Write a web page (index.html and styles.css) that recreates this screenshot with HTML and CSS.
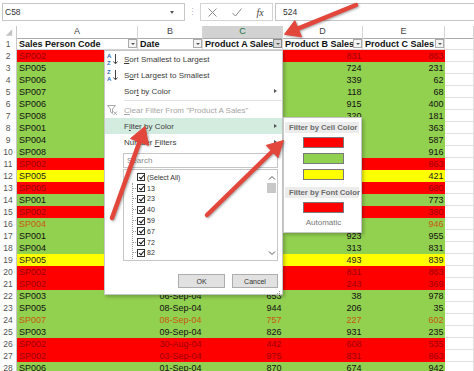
FILE: index.html
```html
<!DOCTYPE html>
<html>
<head>
<meta charset="utf-8">
<link rel="stylesheet" href="styles.css">
</head>
<body>
<div class="fbar">
  <div class="namebox"><span>C58</span><span class="nb-arrow"></span></div>
  <div class="fdots">⋮</div>
  <div class="fxbox">
    <div class="slot"><svg width="9" height="9" viewBox="0 0 9 9"><path d="M0.5 0.5L8.5 8.5M8.5 0.5L0.5 8.5" stroke="#8c8c8c" stroke-width="1" fill="none"/></svg></div>
    <div class="slot"><svg width="10" height="9" viewBox="0 0 10 9"><path d="M0.5 5L3.5 8L9.5 0.5" stroke="#8c8c8c" stroke-width="1" fill="none"/></svg></div>
    <div class="slot"><span class="fx">fx</span></div>
  </div>
  <div class="finput">524</div>
</div>

<div class="sheet">
  <div class="row colhead">
    <div class="corner"><svg width="17" height="12" viewBox="0 0 17 12"><polygon points="13,3 13,10 6,10" fill="#c4c4c4"/></svg></div>
    <div class="ch">A</div><div class="ch">B</div><div class="ch sel">C</div><div class="ch">D</div><div class="ch">E</div><div class="ch"></div>
  </div>
  <div class="row hdr">
    <div class="rn">1</div>
    <div class="hc"><span class="ht">Sales Person Code</span><span class="fb"></span></div>
    <div class="hc"><span class="ht">Date</span><span class="fb"></span></div>
    <div class="hc"><span class="ht">Product A Sales</span><span class="fb on"></span></div>
    <div class="hc"><span class="ht">Product B Sales</span><span class="fb"></span></div>
    <div class="hc"><span class="ht">Product C Sales</span><span class="fb"></span></div>
    <div class="c x"></div>
  </div>
  <div class="row r"><div class="rn">2</div><div class="c">SP002</div><div class="c n">02-Sep-04</div><div class="c n">524</div><div class="c n">831</div><div class="c n">863</div><div class="c x"></div></div>
  <div class="row g"><div class="rn">3</div><div class="c">SP005</div><div class="c n">01-Sep-04</div><div class="c n">412</div><div class="c n">724</div><div class="c n">231</div><div class="c x"></div></div>
  <div class="row g"><div class="rn">4</div><div class="c">SP006</div><div class="c n">05-Sep-04</div><div class="c n">145</div><div class="c n">339</div><div class="c n">62</div><div class="c x"></div></div>
  <div class="row g"><div class="rn">5</div><div class="c">SP007</div><div class="c n">31-Aug-04</div><div class="c n">882</div><div class="c n">118</div><div class="c n">68</div><div class="c x"></div></div>
  <div class="row g"><div class="rn">6</div><div class="c">SP006</div><div class="c n">04-Sep-04</div><div class="c n">301</div><div class="c n">915</div><div class="c n">400</div><div class="c x"></div></div>
  <div class="row g"><div class="rn">7</div><div class="c">SP008</div><div class="c n">07-Sep-04</div><div class="c n">677</div><div class="c n">320</div><div class="c n">181</div><div class="c x"></div></div>
  <div class="row g"><div class="rn">8</div><div class="c">SP001</div><div class="c n">02-Sep-04</div><div class="c n">259</div><div class="c n">563</div><div class="c n">363</div><div class="c x"></div></div>
  <div class="row g"><div class="rn">9</div><div class="c">SP004</div><div class="c n">06-Sep-04</div><div class="c n">713</div><div class="c n">402</div><div class="c n">587</div><div class="c x"></div></div>
  <div class="row g"><div class="rn">10</div><div class="c">SP008</div><div class="c n">03-Sep-04</div><div class="c n">498</div><div class="c n">190</div><div class="c n">916</div><div class="c x"></div></div>
  <div class="row r"><div class="rn">11</div><div class="c">SP002</div><div class="c n">30-Aug-04</div><div class="c n">524</div><div class="c n">831</div><div class="c n">863</div><div class="c x"></div></div>
  <div class="row y"><div class="rn">12</div><div class="c">SP005</div><div class="c n">09-Sep-04</div><div class="c n">333</div><div class="c n">512</div><div class="c n">421</div><div class="c x"></div></div>
  <div class="row r"><div class="rn">13</div><div class="c">SP005</div><div class="c n">01-Sep-04</div><div class="c n">605</div><div class="c n">254</div><div class="c n">680</div><div class="c x"></div></div>
  <div class="row g"><div class="rn">14</div><div class="c">SP001</div><div class="c n">08-Sep-04</div><div class="c n">187</div><div class="c n">611</div><div class="c n">773</div><div class="c x"></div></div>
  <div class="row r"><div class="rn">15</div><div class="c">SP002</div><div class="c n">05-Sep-04</div><div class="c n">742</div><div class="c n">495</div><div class="c n">380</div><div class="c x"></div></div>
  <div class="row g o"><div class="rn">16</div><div class="c">SP004</div><div class="c n">04-Sep-04</div><div class="c n">561</div><div class="c n">703</div><div class="c n">946</div><div class="c x"></div></div>
  <div class="row g"><div class="rn">17</div><div class="c">SP001</div><div class="c n">07-Sep-04</div><div class="c n">298</div><div class="c n">923</div><div class="c n">955</div><div class="c x"></div></div>
  <div class="row g"><div class="rn">18</div><div class="c">SP004</div><div class="c n">03-Sep-04</div><div class="c n">834</div><div class="c n">313</div><div class="c n">831</div><div class="c x"></div></div>
  <div class="row y"><div class="rn">19</div><div class="c">SP005</div><div class="c n">02-Sep-04</div><div class="c n">106</div><div class="c n">493</div><div class="c n">839</div><div class="c x"></div></div>
  <div class="row r"><div class="rn">20</div><div class="c">SP002</div><div class="c n">31-Aug-04</div><div class="c n">524</div><div class="c n">831</div><div class="c n">863</div><div class="c x"></div></div>
  <div class="row r"><div class="rn">21</div><div class="c">SP002</div><div class="c n">06-Sep-04</div><div class="c n">918</div><div class="c n">243</div><div class="c n">369</div><div class="c x"></div></div>
  <div class="row g"><div class="rn">22</div><div class="c">SP003</div><div class="c n">06-Sep-04</div><div class="c n">653</div><div class="c n">38</div><div class="c n">978</div><div class="c x"></div></div>
  <div class="row g"><div class="rn">23</div><div class="c">SP005</div><div class="c n">08-Sep-04</div><div class="c n">944</div><div class="c n">206</div><div class="c n">35</div><div class="c x"></div></div>
  <div class="row g o"><div class="rn">24</div><div class="c">SP007</div><div class="c n">08-Sep-04</div><div class="c n">757</div><div class="c n">227</div><div class="c n">602</div><div class="c x"></div></div>
  <div class="row g"><div class="rn">25</div><div class="c">SP003</div><div class="c n">09-Sep-04</div><div class="c n">826</div><div class="c n">931</div><div class="c n">235</div><div class="c x"></div></div>
  <div class="row r"><div class="rn">26</div><div class="c">SP002</div><div class="c n">30-Aug-04</div><div class="c n">442</div><div class="c n">608</div><div class="c n">535</div><div class="c x"></div></div>
  <div class="row r"><div class="rn">27</div><div class="c">SP002</div><div class="c n">03-Sep-04</div><div class="c n">975</div><div class="c n">831</div><div class="c n">863</div><div class="c x"></div></div>
  <div class="row g"><div class="rn">28</div><div class="c">SP006</div><div class="c n">01-Sep-04</div><div class="c n">870</div><div class="c n">674</div><div class="c n">942</div><div class="c x"></div></div>
</div>

<div class="menu">
  <div class="mi"><span class="ico"><svg width="11" height="12" viewBox="0 0 11 12"><text x="0" y="5" class="az a">A</text><text x="0" y="11.5" class="az z">Z</text><path d="M8.5 1V10.5M6.5 8.5L8.5 10.8L10.5 8.5" stroke="#444" stroke-width="1" fill="none"/></svg></span><span><u>S</u>ort Smallest to Largest</span></div>
  <div class="mi"><span class="ico"><svg width="11" height="12" viewBox="0 0 11 12"><text x="0" y="5" class="az z">Z</text><text x="0" y="11.5" class="az a">A</text><path d="M8.5 1V10.5M6.5 8.5L8.5 10.8L10.5 8.5" stroke="#444" stroke-width="1" fill="none"/></svg></span><span>S<u>o</u>rt Largest to Smallest</span></div>
  <div class="mi"><span class="ico"></span><span>Sor<u>t</u> by Color</span><span class="arr"></span></div>
  <div class="sep"></div>
  <div class="mi dis"><span class="ico"><svg width="11" height="11" viewBox="0 0 11 11"><path d="M0.5 0.5H8.5L5.5 4V8.5L3.5 7V4Z" fill="none" stroke="#a8a8a8" stroke-width="1"/><path d="M6.5 6.5L10 10M10 6.5L6.5 10" stroke="#a8a8a8" stroke-width="1"/></svg></span><span><u>C</u>lear Filter From "Product A Sales"</span></div>
  <div class="mi hl"><span class="ico"></span><span>F<u>i</u>lter by Color</span><span class="arr"></span></div>
  <div class="mi"><span class="ico"></span><span>Number <u>F</u>ilters</span><span class="arr"></span></div>
  <div class="search">Search</div>
  <div class="list">
    <div class="items">
      <div class="li top"><span class="cb"></span><span>(Select All)</span></div>
      <div class="tree">
        <div class="li"><span class="tick"></span><span class="cb"></span><span>13</span></div>
        <div class="li"><span class="tick"></span><span class="cb"></span><span>23</span></div>
        <div class="li"><span class="tick"></span><span class="cb"></span><span>40</span></div>
        <div class="li"><span class="tick"></span><span class="cb"></span><span>59</span></div>
        <div class="li"><span class="tick"></span><span class="cb"></span><span>67</span></div>
        <div class="li"><span class="tick"></span><span class="cb"></span><span>72</span></div>
        <div class="li"><span class="tick"></span><span class="cb"></span><span>82</span></div>
        <div class="li"><span class="tick"></span><span class="cb"></span><span>95</span></div>
      </div>
    </div>
    <div class="scroll">
      <svg width="10" height="6" viewBox="0 0 10 6"><path d="M2 4.5L5 1.5L8 4.5" stroke="#555" fill="none"/></svg>
      <div class="thumb"></div>
      <div class="sfill"></div>
      <svg width="10" height="6" viewBox="0 0 10 6"><path d="M2 1.5L5 4.5L8 1.5" stroke="#555" fill="none"/></svg>
    </div>
  </div>
  <div class="btns">
    <div class="btn ok">OK</div>
    <div class="btn cancel">Cancel</div>
  </div>
  <div class="grip"><svg width="5" height="5" viewBox="0 0 5 5"><rect x="3" y="0" width="1" height="1" fill="#999"/><rect x="1" y="2" width="1" height="1" fill="#999"/><rect x="3" y="2" width="1" height="1" fill="#999"/><rect x="0" y="4" width="1" height="1" fill="#999"/><rect x="2" y="4" width="1" height="1" fill="#999"/><rect x="4" y="4" width="1" height="1" fill="#999"/></svg></div>
</div>

<div class="submenu">
  <div class="shead">Filter by Cell Color</div>
  <div class="sw red first"></div>
  <div class="sw green"></div>
  <div class="sw yellow"></div>
  <div class="shead second">Filter by Font Color</div>
  <div class="sw red after"></div>
  <div class="auto">Automatic</div>
</div>

<svg class="arrows" width="474" height="371" viewBox="0 0 474 371">
  <g class="arrow">
    <line x1="356" y1="5" x2="298" y2="28.7"/>
    <polygon points="284.5,34.3 301.5,36.8 294.8,20.6"/>
    <line x1="112" y1="218" x2="139.5" y2="142"/>
    <polygon points="145,126.5 130.5,138.5 148.5,145.3"/>
    <line x1="207" y1="215" x2="272.2" y2="151.5"/>
    <polygon points="283.5,140.5 266.2,145.4 278,157.6"/>
  </g>
</svg>
</body>
</html>
```

FILE: styles.css
```css
* { box-sizing: border-box; }

body {
  margin: 0;
  width: 474px;
  height: 371px;
  overflow: hidden;
  position: relative;
  background: #fff;
  font-family: "Liberation Sans", Arial, sans-serif;
  color: #222;
}

/* formula bar */
.fbar {
  height: 26px;
  display: flex;
  align-items: flex-start;
  padding-top: 3px;
}
.namebox {
  margin-left: 2px;
  width: 183px;
  height: 18px;
  border: 1px solid #c6c6c6;
  display: flex;
  align-items: center;
  justify-content: space-between;
  padding: 0 10px 0 2px;
  font-size: 8.5px;
  color: #333;
}
.nb-arrow {
  width: 0;
  height: 0;
  border-left: 2.5px solid transparent;
  border-right: 2.5px solid transparent;
  border-top: 3px solid #555;
}
.fdots {
  width: 15px;
  height: 18px;
  font-size: 9px;
  line-height: 18px;
  color: #b8b8b8;
  text-align: center;
}
.fxbox {
  width: 73px;
  height: 18px;
  border: 1px solid #d4d4d4;
  display: flex;
  align-items: center;
}
.slot {
  width: 24px;
  display: flex;
  justify-content: center;
  align-items: center;
}
.fx {
  font-family: "Liberation Serif", serif;
  font-style: italic;
  font-size: 10px;
  color: #444;
}
.finput {
  flex: 1;
  margin-left: 2px;
  height: 18px;
  border: 1px solid #c6c6c6;
  border-right: none;
  padding-left: 7px;
  font-size: 8.5px;
  line-height: 16px;
  color: #333;
}

/* sheet */
.row {
  display: grid;
  grid-template-columns: 17px 121px 65px 80px 80px 82px 29px;
  height: 12px;
}
.corner {
  border-right: 1px solid #c8c8c8;
  border-bottom: 1px solid #ababab;
  display: flex;
}
.ch {
  font-size: 9px;
  color: #444;
  text-align: center;
  line-height: 11px;
  border-right: 1px solid #d4d4d4;
  border-bottom: 1px solid #ababab;
}
.ch.sel {
  background: #d2d2d2;
  color: #217346;
}
.rn {
  font-size: 8.5px;
  color: #555;
  text-align: center;
  line-height: 12px;
  border-right: 1px solid #c8c8c8;
  background: #fff;
}
.hc {
  display: flex;
  align-items: center;
  padding-left: 2px;
  font-weight: bold;
  font-size: 9px;
  color: #111;
  border-right: 1px solid #d4d4d4;
  border-bottom: 1px solid #d4d4d4;
  overflow: hidden;
}
.ht {
  flex: 1;
  min-width: 0;
  white-space: nowrap;
  overflow: hidden;
}
.fb {
  flex: none;
  width: 9px;
  height: 9px;
  border: 1px solid #ababab;
  background: #f4f4f4;
  display: flex;
  align-items: center;
  justify-content: center;
}
.fb::after {
  content: "";
  border-left: 2px solid transparent;
  border-right: 2px solid transparent;
  border-top: 2px solid #555;
}
.fb.on {
  background: #d8d8d8;
  border-color: #8a8a8a;
}
.c {
  font-size: 9px;
  line-height: 12px;
  padding: 0 2px;
  white-space: nowrap;
  overflow: hidden;
}
.c.n { text-align: right; padding-right: 1.5px; }
.c.x {
  border-right: 1px solid #e1e1e1;
  border-bottom: 1px solid #e1e1e1;
}
.row.g .c:not(.x) { background: #92d050; color: #111; }
.row.r .c:not(.x) { background: #ff0000; color: #9c0006; }
.row.y .c:not(.x) { background: #ffff00; color: #222; }
.row.o .c:not(.x) { color: #c55a11; }

/* filter menu */
.menu {
  position: absolute;
  left: 104px;
  top: 50px;
  width: 179px;
  height: 245px;
  border: 1px solid #c6c6c6;
  background: #fff;
  box-shadow: 2px 2px 3px rgba(0, 0, 0, 0.22);
  font-size: 8px;
  color: #3c3c3c;
  display: flex;
  flex-direction: column;
}
.mi {
  flex: none;
  height: 16px;
  display: flex;
  align-items: center;
  white-space: nowrap;
}
.mi .ico {
  width: 19px;
  flex: none;
  padding-left: 2px;
  display: flex;
  align-items: center;
}
.mi.dis { color: #a6a6a6; }
.mi.hl { background: #d4ecdf; }
.arr {
  margin-left: auto;
  margin-right: 5px;
  width: 0;
  height: 0;
  border-top: 2.5px solid transparent;
  border-bottom: 2.5px solid transparent;
  border-left: 3px solid #555;
}
.az {
  font-family: "Liberation Sans", Arial, sans-serif;
  font-size: 6px;
  font-weight: bold;
}
.az.a { fill: #2e6db4; }
.az.z { fill: #2e6db4; }
.sep {
  flex: none;
  height: 1px;
  margin: 1px 0 1px 19px;
  background: #e1e1e1;
}
.search {
  flex: none;
  margin: 3px 4px 0 18px;
  height: 15px;
  border: 1px solid #c6c6c6;
  padding-left: 3px;
  line-height: 13px;
  color: #8a8a8a;
}
.list {
  flex: none;
  margin: 1px 4px 0 18px;
  height: 92px;
  border: 1px solid #c6c6c6;
  display: flex;
  overflow: hidden;
}
.items {
  flex: 1;
  padding-top: 2px;
  font-size: 7px;
  color: #333;
}
.li {
  height: 10.8px;
  display: flex;
  align-items: center;
  gap: 2px;
}
.li.top { padding-left: 13px; }
.tree {
  margin-left: 8px;
  border-left: 1px dotted #9a9a9a;
}
.tick {
  width: 3px;
  border-top: 1px dotted #9a9a9a;
  margin-right: -1px;
}
.cb {
  width: 8px;
  height: 8px;
  border: 1px solid #333;
  background: #fff;
  position: relative;
  flex: none;
}
.cb::after {
  content: "";
  position: absolute;
  left: 1.5px;
  top: 0px;
  width: 2px;
  height: 4px;
  border-right: 1.5px solid #111;
  border-bottom: 1.5px solid #111;
  transform: rotate(40deg);
}
.scroll {
  width: 11px;
  flex: none;
  display: flex;
  flex-direction: column;
  align-items: center;
  padding-top: 5px;
  padding-bottom: 4px;
}
.thumb {
  width: 9px;
  height: 10px;
  margin-top: 2px;
  background: #c8c8c8;
}
.sfill { flex: 1; }
.btns {
  flex: none;
  margin-top: 13px;
  display: flex;
  justify-content: flex-end;
  gap: 7px;
  padding-right: 4px;
}
.btn {
  height: 14px;
  border: 1px solid #adadad;
  background: #e1e1e1;
  display: flex;
  align-items: center;
  justify-content: center;
  font-size: 7px;
  color: #333;
}
.btn.ok { width: 47px; }
.btn.cancel { width: 46px; }
.grip {
  flex: none;
  display: flex;
  justify-content: flex-end;
  padding-right: 1px;
  margin-top: 3px;
}

/* submenu */
.submenu {
  position: absolute;
  left: 283px;
  top: 117px;
  width: 79px;
  height: 116px;
  border: 1px solid #c6c6c6;
  background: #fff;
  box-shadow: 2px 2px 3px rgba(0, 0, 0, 0.22);
  padding-top: 4px;
  display: flex;
  flex-direction: column;
}
.shead {
  flex: none;
  height: 11px;
  margin: 0 2px 0 1px;
  background: #ececec;
  padding-left: 4px;
  font-size: 7.7px;
  font-weight: bold;
  line-height: 11px;
  color: #6b6b6b;
  white-space: nowrap;
}
.shead.second { margin-top: 7px; }
.sw {
  flex: none;
  width: 41px;
  height: 11px;
  margin: 5px 0 0 19px;
  border: 1px solid #7a7a7a;
}
.sw.first, .sw.after { margin-top: 4px; }
.sw.red { background: #ff0000; }
.sw.green { background: #92d050; }
.sw.yellow { background: #ffff00; }
.auto {
  flex: none;
  width: 41px;
  margin: 4px 0 0 19px;
  height: 12px;
  line-height: 12px;
  text-align: center;
  font-size: 8px;
  color: #777;
  white-space: nowrap;
}

/* annotation arrows */
.arrows {
  position: absolute;
  left: 0;
  top: 0;
  pointer-events: none;
}
.arrow {
  fill: #e3463b;
  stroke: #e3463b;
  filter: drop-shadow(1px 1.5px 1px rgba(0, 0, 0, 0.35));
}
.arrow line {
  stroke-width: 4.5;
  stroke-linecap: round;
}
.arrow polygon {
  stroke-width: 1;
  stroke-linejoin: round;
}
```
